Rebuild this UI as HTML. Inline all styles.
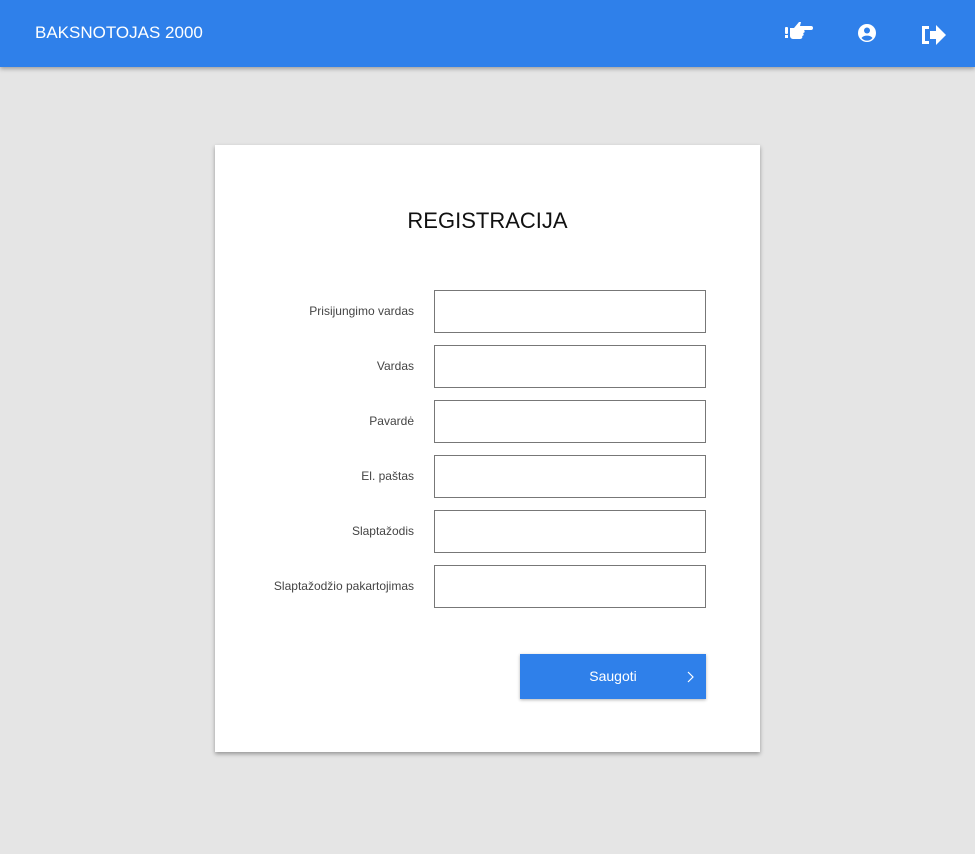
<!DOCTYPE html>
<html><head><meta charset="utf-8"><style>
*{box-sizing:border-box;margin:0;padding:0}
body{width:975px;height:854px;background:#e5e5e5;font-family:"Liberation Sans",sans-serif;position:relative;overflow:hidden}
.bar{position:absolute;left:0;top:0;width:975px;height:67px;background:#2f80ea;box-shadow:0 2px 4px rgba(0,0,0,.3)}
.title{position:absolute;left:35px;top:23px;color:#fff;font-size:17px}
.card{position:absolute;left:215px;top:145px;width:545px;height:607px;background:#fff;box-shadow:0 2px 4px rgba(0,0,0,.35)}
h1{position:absolute;top:63px;width:100%;text-align:center;font-weight:normal;font-size:22px;color:#111}
.lab{position:absolute;right:346px;font-size:12px;color:#444;text-align:right}
.inp{position:absolute;left:219px;width:272px;height:43px;border:1px solid #777}
.btn{position:absolute;left:305px;top:509px;width:186px;height:45px;background:#2f80ea;color:#fff;font-size:14px;text-align:center;line-height:45px;box-shadow:0 1px 3px rgba(0,0,0,.3)}
</style></head><body>
<div class="bar"><div class="title">BAKSNOTOJAS 2000</div>
<svg style="position:absolute;left:784px;top:20px" width="30" height="24" viewBox="0 0 30 24" fill="#fff"><rect x="1" y="7" width="3" height="7" rx="1"/><rect x="1" y="15" width="3" height="3"/><path d="M6 8h4l5-6h2l-1 4h11a2 2 0 0 1 0 4h-7c1 1 1 3-1 3c1 1 1 3-1 3c1 1 0 3-2 3H9a3 3 0 0 1-3-3z"/></svg>
<svg style="position:absolute;left:857px;top:23px" width="20" height="20" viewBox="0 0 20 20"><circle cx="10" cy="10" r="9" fill="#fff"/><circle cx="10" cy="7.5" r="3" fill="#2f80ea"/><path d="M4.5 15a6 4 0 0 1 11 0a7 7 0 0 1-11 0z" fill="#2f80ea"/></svg>
<svg style="position:absolute;left:920px;top:24px" width="27" height="22" viewBox="0 0 27 22" fill="#fff"><path d="M2 2h7v3H5v12h4v3H2z"/><path d="M10 7h6V1l10 10-10 10v-6h-6z"/></svg>
</div>
<div class="card"><h1>REGISTRACIJA</h1>
<div class="lab" style="top:159px">Prisijungimo vardas</div><div class="inp" style="top:145px"></div>
<div class="lab" style="top:214px">Vardas</div><div class="inp" style="top:200px"></div>
<div class="lab" style="top:269px">Pavardė</div><div class="inp" style="top:255px"></div>
<div class="lab" style="top:324px">El. paštas</div><div class="inp" style="top:310px"></div>
<div class="lab" style="top:379px">Slaptažodis</div><div class="inp" style="top:365px"></div>
<div class="lab" style="top:434px">Slaptažodžio pakartojimas</div><div class="inp" style="top:420px"></div>
<div class="btn">Saugoti<svg style="position:absolute;right:12px;top:17px" width="7" height="12" viewBox="0 0 7 12"><path d="M1 1l5 5-5 5" fill="none" stroke="#fff" stroke-width="1.2"/></svg></div>
</div>
</body></html>
